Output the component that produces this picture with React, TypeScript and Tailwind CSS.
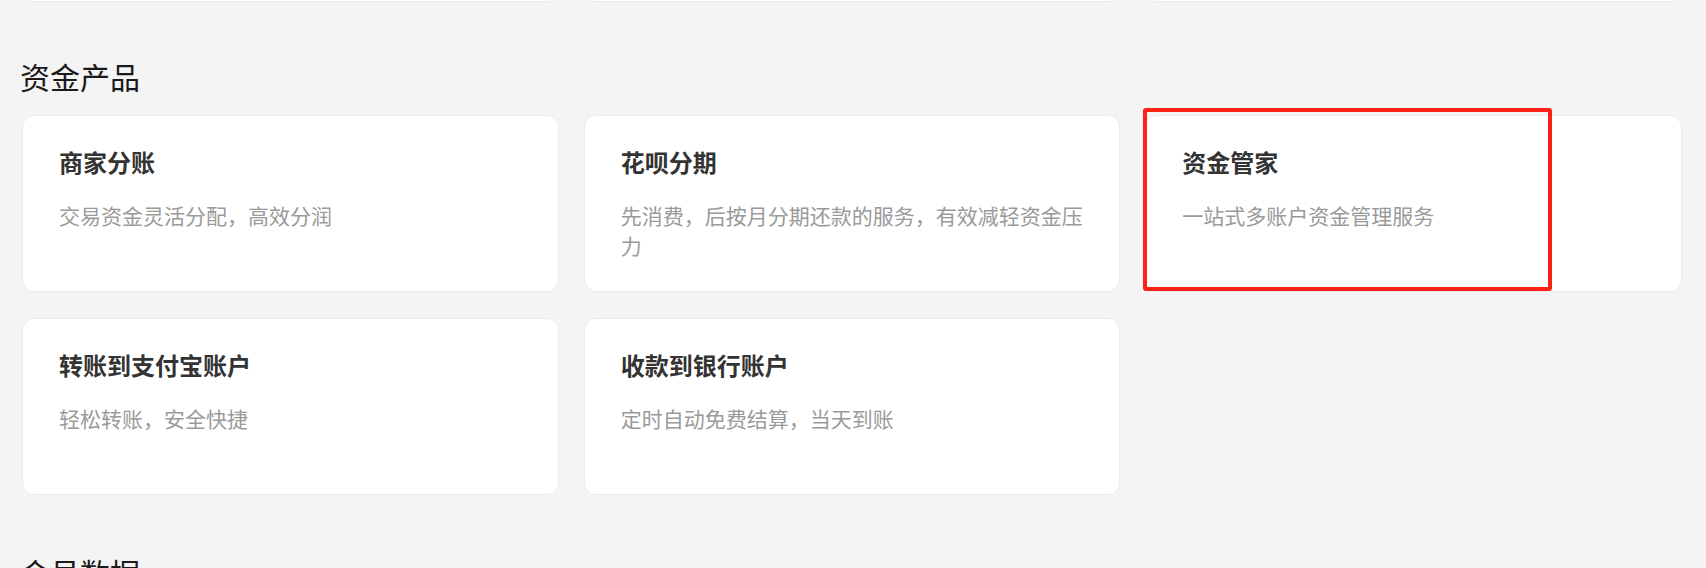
const products = [
  { title: "商家分账", desc: "交易资金灵活分配，高效分润" },
  { title: "花呗分期", desc: "先消费，后按月分期还款的服务，有效减轻资金压力" },
  { title: "资金管家", desc: "一站式多账户资金管理服务", marked: true },
  { title: "转账到支付宝账户", desc: "轻松转账，安全快捷" },
  { title: "收款到银行账户", desc: "定时自动免费结算，当天到账" },
];

const ProductCard = ({ title, desc, marked }: { title: string; desc: string; marked?: boolean }) => {
  return (
    <div className="relative h-[177px] rounded-[12px] border border-[#ececec] bg-white pt-[28px] pl-[36px] pr-[30px]">
      <p className="text-[24px] leading-[36px] font-bold text-[#333333]">{title}</p>
      <p className="mt-[20px] text-[21px] leading-[30px] text-[#9a9a9a]">{desc}</p>
      {marked && (
        <div className="absolute -left-[3px] -top-[8px] h-[183px] w-[409px] rounded-[3px] border-[4px] border-[#fe2216]" />
      )}
    </div>
  );
};

const App = () => {
  return (
    <div className="h-screen overflow-hidden bg-[#f4f4f4] pl-[22px] pr-[24px] font-['Noto_Sans_CJK_SC','Noto_Sans',sans-serif]">
      {/* bottom edge of the previous section's cards */}
      <div className="grid grid-cols-3 gap-x-[25px] overflow-hidden">
        <div className="-mt-[175px] h-[177px] rounded-[12px] border border-[#ececec] bg-white" />
        <div className="-mt-[175px] h-[177px] rounded-[12px] border border-[#ececec] bg-white" />
        <div className="-mt-[175px] h-[177px] rounded-[12px] border border-[#ececec] bg-white" />
      </div>

      <h2 className="mt-[53px] -ml-[2px] text-[30px] leading-[42px] font-normal text-[#1a1a1a]">资金产品</h2>

      <div className="mt-[18px] grid grid-cols-3 gap-x-[25px] gap-y-[26px]">
        {products.map((p) => (
          <ProductCard key={p.title} title={p.title} desc={p.desc} marked={p.marked} />
        ))}
      </div>

      <h2 className="mt-[56px] -ml-[2px] text-[30px] leading-[42px] font-normal text-[#1a1a1a]">会员数据</h2>
    </div>
  );
};

export default App;
